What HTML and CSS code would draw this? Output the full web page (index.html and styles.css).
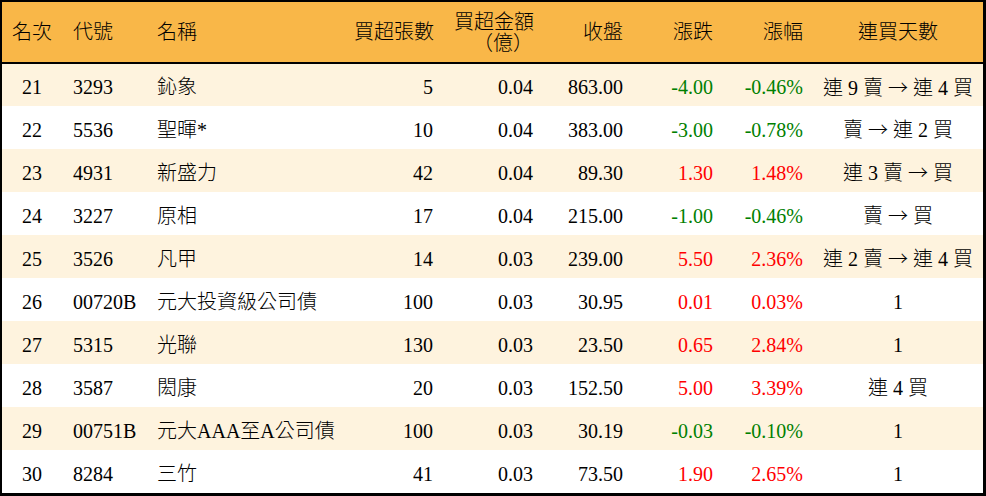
FILE: index.html
```html
<!DOCTYPE html>
<html lang="zh-Hant">
<head>
<meta charset="utf-8">
<title>買超排行</title>
<link rel="stylesheet" href="styles.css">
</head>
<body>
<div class="frame">
<table class="rank">
<colgroup>
<col class="c-rank"><col class="c-code"><col class="c-name"><col class="c-vol"><col class="c-amt"><col class="c-close"><col class="c-chg"><col class="c-pct"><col class="c-days">
</colgroup>
<thead>
<tr>
<th class="ctr">名次</th>
<th class="lft">代號</th>
<th class="lft">名稱</th>
<th class="rgt">買超張數</th>
<th class="rgt two">買超金額<br><span class="paren">（億）</span></th>
<th class="rgt">收盤</th>
<th class="rgt">漲跌</th>
<th class="rgt">漲幅</th>
<th class="ctr">連買天數</th>
</tr>
</thead>
<tbody>
<tr class="odd"><td class="ctr">21</td><td>3293</td><td>鈊象</td><td class="rgt">5</td><td class="rgt">0.04</td><td class="rgt">863.00</td><td class="rgt dn">-4.00</td><td class="rgt dn">-0.46%</td><td class="ctr">連 9 賣 <span class="arr">→</span> 連 4 買</td></tr>
<tr><td class="ctr">22</td><td>5536</td><td>聖暉*</td><td class="rgt">10</td><td class="rgt">0.04</td><td class="rgt">383.00</td><td class="rgt dn">-3.00</td><td class="rgt dn">-0.78%</td><td class="ctr">賣 <span class="arr">→</span> 連 2 買</td></tr>
<tr class="odd"><td class="ctr">23</td><td>4931</td><td>新盛力</td><td class="rgt">42</td><td class="rgt">0.04</td><td class="rgt">89.30</td><td class="rgt up">1.30</td><td class="rgt up">1.48%</td><td class="ctr">連 3 賣 <span class="arr">→</span> 買</td></tr>
<tr><td class="ctr">24</td><td>3227</td><td>原相</td><td class="rgt">17</td><td class="rgt">0.04</td><td class="rgt">215.00</td><td class="rgt dn">-1.00</td><td class="rgt dn">-0.46%</td><td class="ctr">賣 <span class="arr">→</span> 買</td></tr>
<tr class="odd"><td class="ctr">25</td><td>3526</td><td>凡甲</td><td class="rgt">14</td><td class="rgt">0.03</td><td class="rgt">239.00</td><td class="rgt up">5.50</td><td class="rgt up">2.36%</td><td class="ctr">連 2 賣 <span class="arr">→</span> 連 4 買</td></tr>
<tr><td class="ctr">26</td><td>00720B</td><td>元大投資級公司債</td><td class="rgt">100</td><td class="rgt">0.03</td><td class="rgt">30.95</td><td class="rgt up">0.01</td><td class="rgt up">0.03%</td><td class="ctr">1</td></tr>
<tr class="odd"><td class="ctr">27</td><td>5315</td><td>光聯</td><td class="rgt">130</td><td class="rgt">0.03</td><td class="rgt">23.50</td><td class="rgt up">0.65</td><td class="rgt up">2.84%</td><td class="ctr">1</td></tr>
<tr><td class="ctr">28</td><td>3587</td><td>閎康</td><td class="rgt">20</td><td class="rgt">0.03</td><td class="rgt">152.50</td><td class="rgt up">5.00</td><td class="rgt up">3.39%</td><td class="ctr">連 4 買</td></tr>
<tr class="odd"><td class="ctr">29</td><td>00751B</td><td>元大AAA至A公司債</td><td class="rgt">100</td><td class="rgt">0.03</td><td class="rgt">30.19</td><td class="rgt dn">-0.03</td><td class="rgt dn">-0.10%</td><td class="ctr">1</td></tr>
<tr><td class="ctr">30</td><td>8284</td><td>三竹</td><td class="rgt">41</td><td class="rgt">0.03</td><td class="rgt">73.50</td><td class="rgt up">1.90</td><td class="rgt up">2.65%</td><td class="ctr">1</td></tr>
</tbody>
</table>
</div>
</body>
</html>
```
FILE: styles.css
```css
html, body {
  margin: 0;
  padding: 0;
  background: #ffffff;
}
.frame {
  width: 986px;
  height: 496px;
  box-sizing: border-box;
  border-style: solid;
  border-color: #000;
  border-width: 2px 3px 3px 2px;
  background: #fff;
  overflow: hidden;
}
.rank {
  width: 981px;
  border-collapse: collapse;
  table-layout: fixed;
  font-family: "Liberation Serif", "Noto Sans CJK TC", serif;
  font-size: 20px;
  font-weight: 300;
  color: #000;
  text-spacing-trim: space-all;
}
.c-rank { width: 60px; }
.c-code { width: 84px; }
.c-name { width: 197px; }
.c-vol { width: 100px; }
.c-amt { width: 100px; }
.c-close { width: 90px; }
.c-chg { width: 90px; }
.c-pct { width: 90px; }
.c-days { width: 170px; }
.rank thead tr {
  height: 59px;
  background: #f9b748;
}
.rank th {
  font-weight: 300;
  box-sizing: border-box;
  height: 61px;
  padding: 0 10px 0 11px;
  border-bottom: 2px solid #000;
  line-height: 20px;
  vertical-align: middle;
  white-space: nowrap;
}
.paren {
  font-family: "Noto Sans CJK TC", sans-serif;
  text-spacing-trim: space-all;
}
.rank td {
  box-sizing: border-box;
  height: 43px;
  padding: 4px 10px 0 11px;
  vertical-align: middle;
  white-space: nowrap;
  line-height: 20px;
}
.rank tbody tr {
  height: 43px;
  background: #ffffff;
}
.rank tbody tr.odd {
  background: #fef3de;
}
.lft { text-align: left; }
.rgt { text-align: right; }
.ctr { text-align: center; }
.rank th.ctr, .rank td.ctr { padding-left: 0; padding-right: 0; }
.arr { font-family: "Noto Sans CJK TC", sans-serif; }
.up { color: #ff0000; }
.dn { color: #008000; }
```
